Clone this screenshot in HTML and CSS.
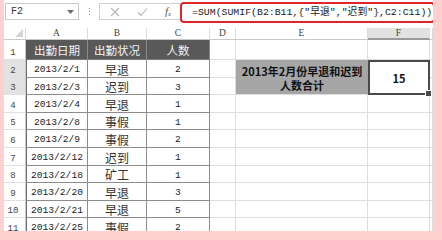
FILE: index.html
```html
<!DOCTYPE html>
<html lang="zh-CN">
<head>
<meta charset="utf-8">
<title>Sheet</title>
<link rel="stylesheet" href="styles.css">
</head>
<body>
<div class="app">
  <div class="fbar">
    <div class="namebox">
      <span class="nb-text">F2</span>
      <svg class="nb-arrow" width="7" height="4" viewBox="0 0 7 4"><path d="M0 0H7L3.5 4Z" fill="#6d6d6d"/></svg>
    </div>
    <div class="vsep"><span></span><span></span><span></span></div>
    <div class="tools">
      <svg class="ico" width="10" height="10" viewBox="0 0 10 10"><path d="M1 1L9 9M9 1L1 9" stroke="#b4b4b4" stroke-width="1.1" fill="none"/></svg>
      <svg class="ico" width="11" height="10" viewBox="0 0 11 10"><path d="M1 5.5L4 8.5L10 1.5" stroke="#b4b4b4" stroke-width="1.1" fill="none"/></svg>
      <span class="fx">f<sub>x</sub></span>
    </div>
    <div class="formula">=SUM(SUMIF(B2:B11,{"早退","迟到"},C2:C11))</div>
  </div>

  <div class="sheet">
    <div class="corner"><svg width="8" height="8" viewBox="0 0 8 8"><path d="M8 0V8H0Z" fill="#d2d2d2"/></svg></div>
    <div class="ch">A</div>
    <div class="ch">B</div>
    <div class="ch">C</div>
    <div class="ch">D</div>
    <div class="ch">E</div>
    <div class="ch ch-sel">F</div>
    <div class="ch"></div>

    <div class="rh r1">1</div>
    <div class="th th-first">出勤日期</div>
    <div class="th">出勤状况</div>
    <div class="th">人数</div>
    <div class="gc"></div><div class="gc"></div><div class="gc"></div><div class="gc"></div>

    <div class="rh rh-sel">2</div>
    <div class="td td-first num">2013/2/1</div>
    <div class="td cjk">早退</div>
    <div class="td num">2</div>
    <div class="gc"></div>
    <div class="label"><span class="ln">2013年2月份早退和迟到</span><span class="ln">人数合计</span></div>
    <div class="result">15<span class="handle"></span></div>
    <div class="gc"></div>

    <div class="rh rh-sel">3</div>
    <div class="td td-first num">2013/2/3</div>
    <div class="td cjk">迟到</div>
    <div class="td num">3</div>
    <div class="gc"></div>
    <div class="gc"></div>

    <div class="rh">4</div>
    <div class="td td-first num">2013/2/4</div>
    <div class="td cjk">早退</div>
    <div class="td num">1</div>
    <div class="gc"></div><div class="gc"></div><div class="gc"></div><div class="gc"></div>

    <div class="rh">5</div>
    <div class="td td-first num">2013/2/8</div>
    <div class="td cjk">事假</div>
    <div class="td num">1</div>
    <div class="gc"></div><div class="gc"></div><div class="gc"></div><div class="gc"></div>

    <div class="rh">6</div>
    <div class="td td-first num">2013/2/9</div>
    <div class="td cjk">事假</div>
    <div class="td num">2</div>
    <div class="gc"></div><div class="gc"></div><div class="gc"></div><div class="gc"></div>

    <div class="rh">7</div>
    <div class="td td-first num">2013/2/12</div>
    <div class="td cjk">迟到</div>
    <div class="td num">1</div>
    <div class="gc"></div><div class="gc"></div><div class="gc"></div><div class="gc"></div>

    <div class="rh">8</div>
    <div class="td td-first num">2013/2/18</div>
    <div class="td cjk">矿工</div>
    <div class="td num">1</div>
    <div class="gc"></div><div class="gc"></div><div class="gc"></div><div class="gc"></div>

    <div class="rh">9</div>
    <div class="td td-first num">2013/2/20</div>
    <div class="td cjk">早退</div>
    <div class="td num">3</div>
    <div class="gc"></div><div class="gc"></div><div class="gc"></div><div class="gc"></div>

    <div class="rh">10</div>
    <div class="td td-first num">2013/2/21</div>
    <div class="td cjk">早退</div>
    <div class="td num">5</div>
    <div class="gc"></div><div class="gc"></div><div class="gc"></div><div class="gc"></div>

    <div class="rh">11</div>
    <div class="td td-first num">2013/2/25</div>
    <div class="td cjk">事假</div>
    <div class="td num">2</div>
    <div class="gc"></div><div class="gc"></div><div class="gc"></div><div class="gc"></div>
  </div>
</div>
</body>
</html>
```

FILE: styles.css
```css
html, body {
  margin: 0;
  padding: 0;
}
body {
  width: 442px;
  height: 240px;
  overflow: hidden;
  background: #ffd0d0;
  font-family: "Liberation Mono", "Noto Sans CJK SC", monospace;
  color: #222;
}
.app {
  margin-left: 4px;
  width: 429px;
  height: 231px;
  background: #fff;
  overflow: hidden;
}

/* formula bar */
.fbar {
  height: 28px;
  display: flex;
  align-items: flex-start;
}
.namebox {
  margin: 3px 0 0 1px;
  border: 1px solid #c9c9c9;
  display: flex;
  align-items: center;
  justify-content: space-between;
  padding: 0 4px 0 5px;
  box-sizing: border-box;
  width: 74px;
  height: 17px;
}
.nb-text {
  font-size: 10px;
  color: #333;
}
.vsep {
  margin: 8px 0 0 10px;
  width: 2px;
  display: flex;
  flex-direction: column;
  gap: 2px;
}
.vsep span {
  width: 1px;
  height: 1px;
  background: #999;
}
.tools {
  margin: 3px 0 0 8px;
  width: 81px;
  height: 17px;
  border: 1px solid #d0d0d0;
  border-right: none;
  box-sizing: border-box;
  display: flex;
  align-items: center;
  padding-left: 10px;
  gap: 17px;
}
.fx {
  font-family: "Liberation Serif", serif;
  font-style: italic;
  font-size: 11px;
  color: #555;
}
.fx sub {
  font-size: 7px;
  vertical-align: -1px;
}
.formula {
  margin-top: 2px;
  flex: 1;
  height: 21px;
  border: 2px solid #e2232b;
  border-radius: 4px;
  box-sizing: border-box;
  font-size: 9.85px;
  line-height: 17px;
  padding-left: 10px;
  white-space: nowrap;
  color: #222;
  margin-right: -2px;
}

/* sheet grid */
.sheet {
  display: grid;
  grid-template-columns: 22px 62px 59px 63px 26px 132px 62px 1fr;
  grid-template-rows: 12px 20px repeat(10, 17.6px);
}
.corner {
  border-right: 1px solid #d8d8d8;
  border-bottom: 1px solid #c8c8c8;
  display: flex;
  align-items: flex-end;
  justify-content: flex-end;
  padding: 0 2px 2px 0;
}
.ch {
  border-right: 1px solid #dcdcdc;
  border-bottom: 1px solid #c8c8c8;
  font-family: "Liberation Serif", "Noto Sans CJK SC", serif;
  font-size: 9.5px;
  color: #444;
  display: flex;
  align-items: flex-end;
  justify-content: center;
  padding-bottom: 1px;
  line-height: 1;
}
.ch-sel {
  background: #e2e2e2;
  border-bottom: 2px solid #9a9a9a;
  padding-bottom: 0;
}
.rh {
  border-right: 1px solid #c8c8c8;
  border-bottom: 1px solid #e0e0e0;
  font-size: 9px;
  color: #444;
  display: flex;
  align-items: flex-end;
  justify-content: center;
  padding: 0 3px 1px 0;
  line-height: 1;
}
.rh-sel {
  background: #e2e2e2;
}
.th {
  background: #595959;
  color: #f4f4f4;
  font-family: "Noto Sans CJK SC", sans-serif;
  font-size: 11.5px;
  display: flex;
  align-items: center;
  justify-content: center;
  border-right: 1px solid #8a8a8a;
  border-bottom: 1px solid #7a7a7a;
  padding-top: 3px;
  line-height: 1;
}
.td {
  border-right: 1px solid #8c8c8c;
  border-bottom: 1px solid #8c8c8c;
  display: flex;
  align-items: flex-end;
  justify-content: center;
  padding-bottom: 2px;
  line-height: 1;
  color: #222;
}
.td-first {
  border-left: 1px solid #6e6e6e;
}
.th-first {
  border-left: 1px solid #595959;
}
.num {
  font-family: "Liberation Mono", monospace;
  font-size: 9.6px;
}
.cjk {
  font-family: "Noto Sans CJK SC", sans-serif;
  font-size: 12px;
  padding-bottom: 1px;
  color: #333;
}
.gc {
  border-right: 1px solid #dedede;
  border-bottom: 1px solid #dedede;
}
.label {
  grid-row: span 2;
  background: #a6a6a6;
  border-bottom: 1px solid #dedede;
  font-family: "Noto Sans CJK SC", sans-serif;
  font-weight: bold;
  font-size: 11px;
  color: #111;
  display: flex;
  flex-direction: column;
  align-items: center;
  justify-content: center;
  padding-top: 1px;
}
.ln {
  display: block;
  line-height: 14px;
  white-space: nowrap;
}
.result {
  grid-row: span 2;
  border: 2px solid #4a4a4a;
  font-family: "Noto Sans CJK SC", sans-serif;
  font-weight: bold;
  font-size: 11px;
  color: #111;
  display: flex;
  align-items: center;
  justify-content: center;
  position: relative;
}
.handle {
  position: absolute;
  right: -4px;
  bottom: -4px;
  width: 5px;
  height: 5px;
  background: #4a4a4a;
  border: 1px solid #fff;
}
```
